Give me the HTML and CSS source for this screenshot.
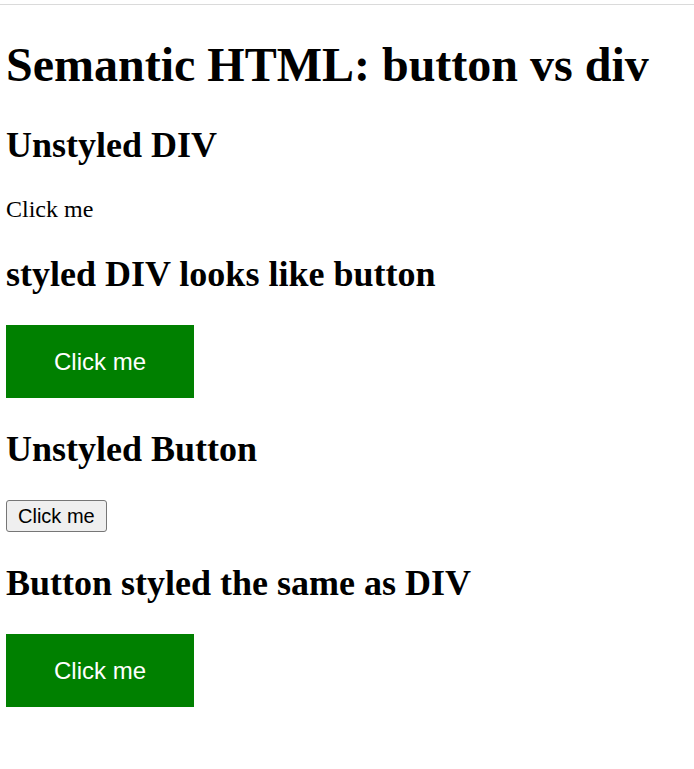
FILE: index.html
```html
<!DOCTYPE html>
<html lang="en">
<head>
<meta charset="utf-8">
<title>Semantic HTML: button vs div</title>
<link rel="stylesheet" href="styles.css">
</head>
<body>
<div class="chrome"></div>
<main class="page">
  <h1>Semantic HTML: button vs div</h1>
  <h2>Unstyled DIV</h2>
  <div class="plain">Click me</div>
  <h2>styled DIV looks like button</h2>
  <div class="green">Click me</div>
  <h2>Unstyled Button</h2>
  <button class="native" type="button">Click me</button>
  <h2>Button styled the same as DIV</h2>
  <button class="green green-btn" type="button">Click me</button>
</main>
</body>
</html>
```
FILE: styles.css
```css
html, body {
  margin: 0;
  padding: 0;
  background: #fff;
}
body {
  font-family: "Liberation Serif", "Times New Roman", serif;
  font-size: 24px;
  color: #000;
}
.chrome {
  height: 4px;
  border-bottom: 1px solid #dadada;
}
.page {
  padding: 0 6px;
}
h1 {
  font-size: 48px;
  font-weight: bold;
  margin: 32px 0;
}
h2 {
  font-size: 36px;
  font-weight: bold;
  margin: 30px 0;
}
.plain {
  margin: 0;
}
.green {
  display: block;
  width: fit-content;
  background: #008000;
  color: #fff;
  font-family: "Liberation Sans", Arial, sans-serif;
  font-size: 24px;
  line-height: 27px;
  padding: 23px 48px;
  border: none;
  border-radius: 0;
  margin: 0;
}
.native {
  display: block;
  width: fit-content;
  font-family: "Liberation Sans", Arial, sans-serif;
  font-size: 20px;
  line-height: 24px;
  padding: 3px 11px;
  border: 1px solid #767676;
  border-radius: 3px;
  background: #efefef;
  color: #000;
  margin: 0;
}
```
